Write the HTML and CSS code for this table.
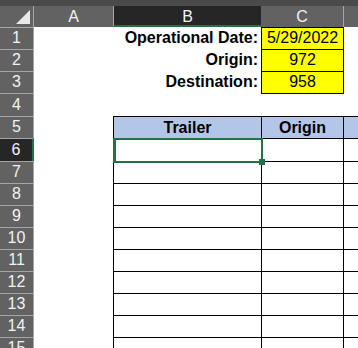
FILE: index.html
```html
<!DOCTYPE html>
<html>
<head>
<meta charset="utf-8">
<link rel="stylesheet" href="styles.css">
</head>
<body>
<div class="strip"></div>
<div class="sheet">
  <div class="ch corner"><svg class="tri" width="14" height="14" viewBox="0 0 14 14"><polygon points="14,0 14,14 0,14" fill="#e8e8e8"/></svg></div>
  <div class="ch cha">A</div>
  <div class="ch chb">B</div>
  <div class="ch chc">C</div>
  <div class="ch chd"></div>

  <div class="rh">1</div><div class="c"></div><div class="c lbl">Operational Date:</div><div class="c yel tb">5/29/2022</div><div class="c"></div>
  <div class="rh">2</div><div class="c"></div><div class="c lbl">Origin:</div><div class="c yel tb">972</div><div class="c"></div>
  <div class="rh">3</div><div class="c"></div><div class="c lbl">Destination:</div><div class="c yel tb">958</div><div class="c"></div>
  <div class="rh">4</div><div class="c"></div><div class="c"></div><div class="c tb"></div><div class="c"></div>
  <div class="rh">5</div><div class="c"></div><div class="c th tl tb">Trailer</div><div class="c th tc tb">Origin</div><div class="c th tb"></div>
  <div class="rh sel">6</div><div class="c"></div><div class="c tl tb active"><span class="selbox"></span><span class="handle"></span></div><div class="c tc tb"></div><div class="c tb"></div>
  <div class="rh">7</div><div class="c"></div><div class="c tl tb"></div><div class="c tc tb"></div><div class="c tb"></div>
  <div class="rh">8</div><div class="c"></div><div class="c tl tb"></div><div class="c tc tb"></div><div class="c tb"></div>
  <div class="rh">9</div><div class="c"></div><div class="c tl tb"></div><div class="c tc tb"></div><div class="c tb"></div>
  <div class="rh">10</div><div class="c"></div><div class="c tl tb"></div><div class="c tc tb"></div><div class="c tb"></div>
  <div class="rh">11</div><div class="c"></div><div class="c tl tb"></div><div class="c tc tb"></div><div class="c tb"></div>
  <div class="rh">12</div><div class="c"></div><div class="c tl tb"></div><div class="c tc tb"></div><div class="c tb"></div>
  <div class="rh">13</div><div class="c"></div><div class="c tl tb"></div><div class="c tc tb"></div><div class="c tb"></div>
  <div class="rh">14</div><div class="c"></div><div class="c tl tb"></div><div class="c tc tb"></div><div class="c tb"></div>
  <div class="rh">15</div><div class="c"></div><div class="c tl tb"></div><div class="c tc tb"></div><div class="c tb"></div>
</div>
</body>
</html>
```
FILE: styles.css
```css
* { box-sizing: border-box; }
html, body { margin: 0; padding: 0; }
body {
  width: 358px;
  height: 348px;
  overflow: hidden;
  background: #ffffff;
  font-family: "Liberation Sans", Arial, sans-serif;
  font-size: 16px;
  color: #000;
}
.strip { height: 6px; background: #4a4a4a; }
.sheet {
  display: grid;
  grid-template-columns: 34px 79px 148px 83px 100px;
  grid-template-rows: 21px 22px 22px 22px 23px 22px 23px 22px 22px 22px 22px 22px 22px 22px 22px 22px;
  width: 466px;
}
.ch {
  background: #626262;
  color: #f2f2f2;
  text-align: center;
  line-height: 19px;
  padding-top: 1px;
}
.corner { border-right: 1px solid #a6a6a6; position: relative; }
.tri { position: absolute; left: 16px; top: 4px; }
.chb { background: #262626; border-left: 1px solid #a6a6a6; border-bottom: 2px solid #217346; }
.chc { border-right: 1px solid #a6a6a6; }
.rh {
  background: #626262;
  color: #f2f2f2;
  border-top: 1px solid #a6a6a6;
  border-right: 1px solid #a6a6a6;
  display: flex;
  align-items: flex-end;
  justify-content: center;
  line-height: 18px;
  padding-bottom: 2px;
}
.rh.sel { background: #262626; border-right: 2px solid #217346; }
.c {
  display: flex;
  align-items: flex-end;
  line-height: 18px;
  padding-bottom: 2px;
  white-space: nowrap;
}
.lbl { justify-content: flex-end; font-weight: bold; padding-right: 3px; }
.yel {
  background: #ffff00;
  justify-content: center;
  border-left: 1px solid #000;
  border-right: 1px solid #000;
}
.tb { border-top: 1px solid #000; }
.tl { border-left: 1px solid #000; }
.tc { border-left: 1px solid #000; border-right: 1px solid #000; }
.th {
  background: #b4c6e7;
  font-weight: bold;
  justify-content: center;
  padding-bottom: 1px;
}
.active { position: relative; overflow: visible; }
.selbox {
  position: absolute;
  left: -1px;
  top: -1px;
  width: 150px;
  height: 25px;
  border: 2px solid #217346;
  border-left-width: 3px;
}
.handle {
  position: absolute;
  left: 145px;
  top: 20px;
  width: 6px;
  height: 6px;
  background: #217346;
}
```
